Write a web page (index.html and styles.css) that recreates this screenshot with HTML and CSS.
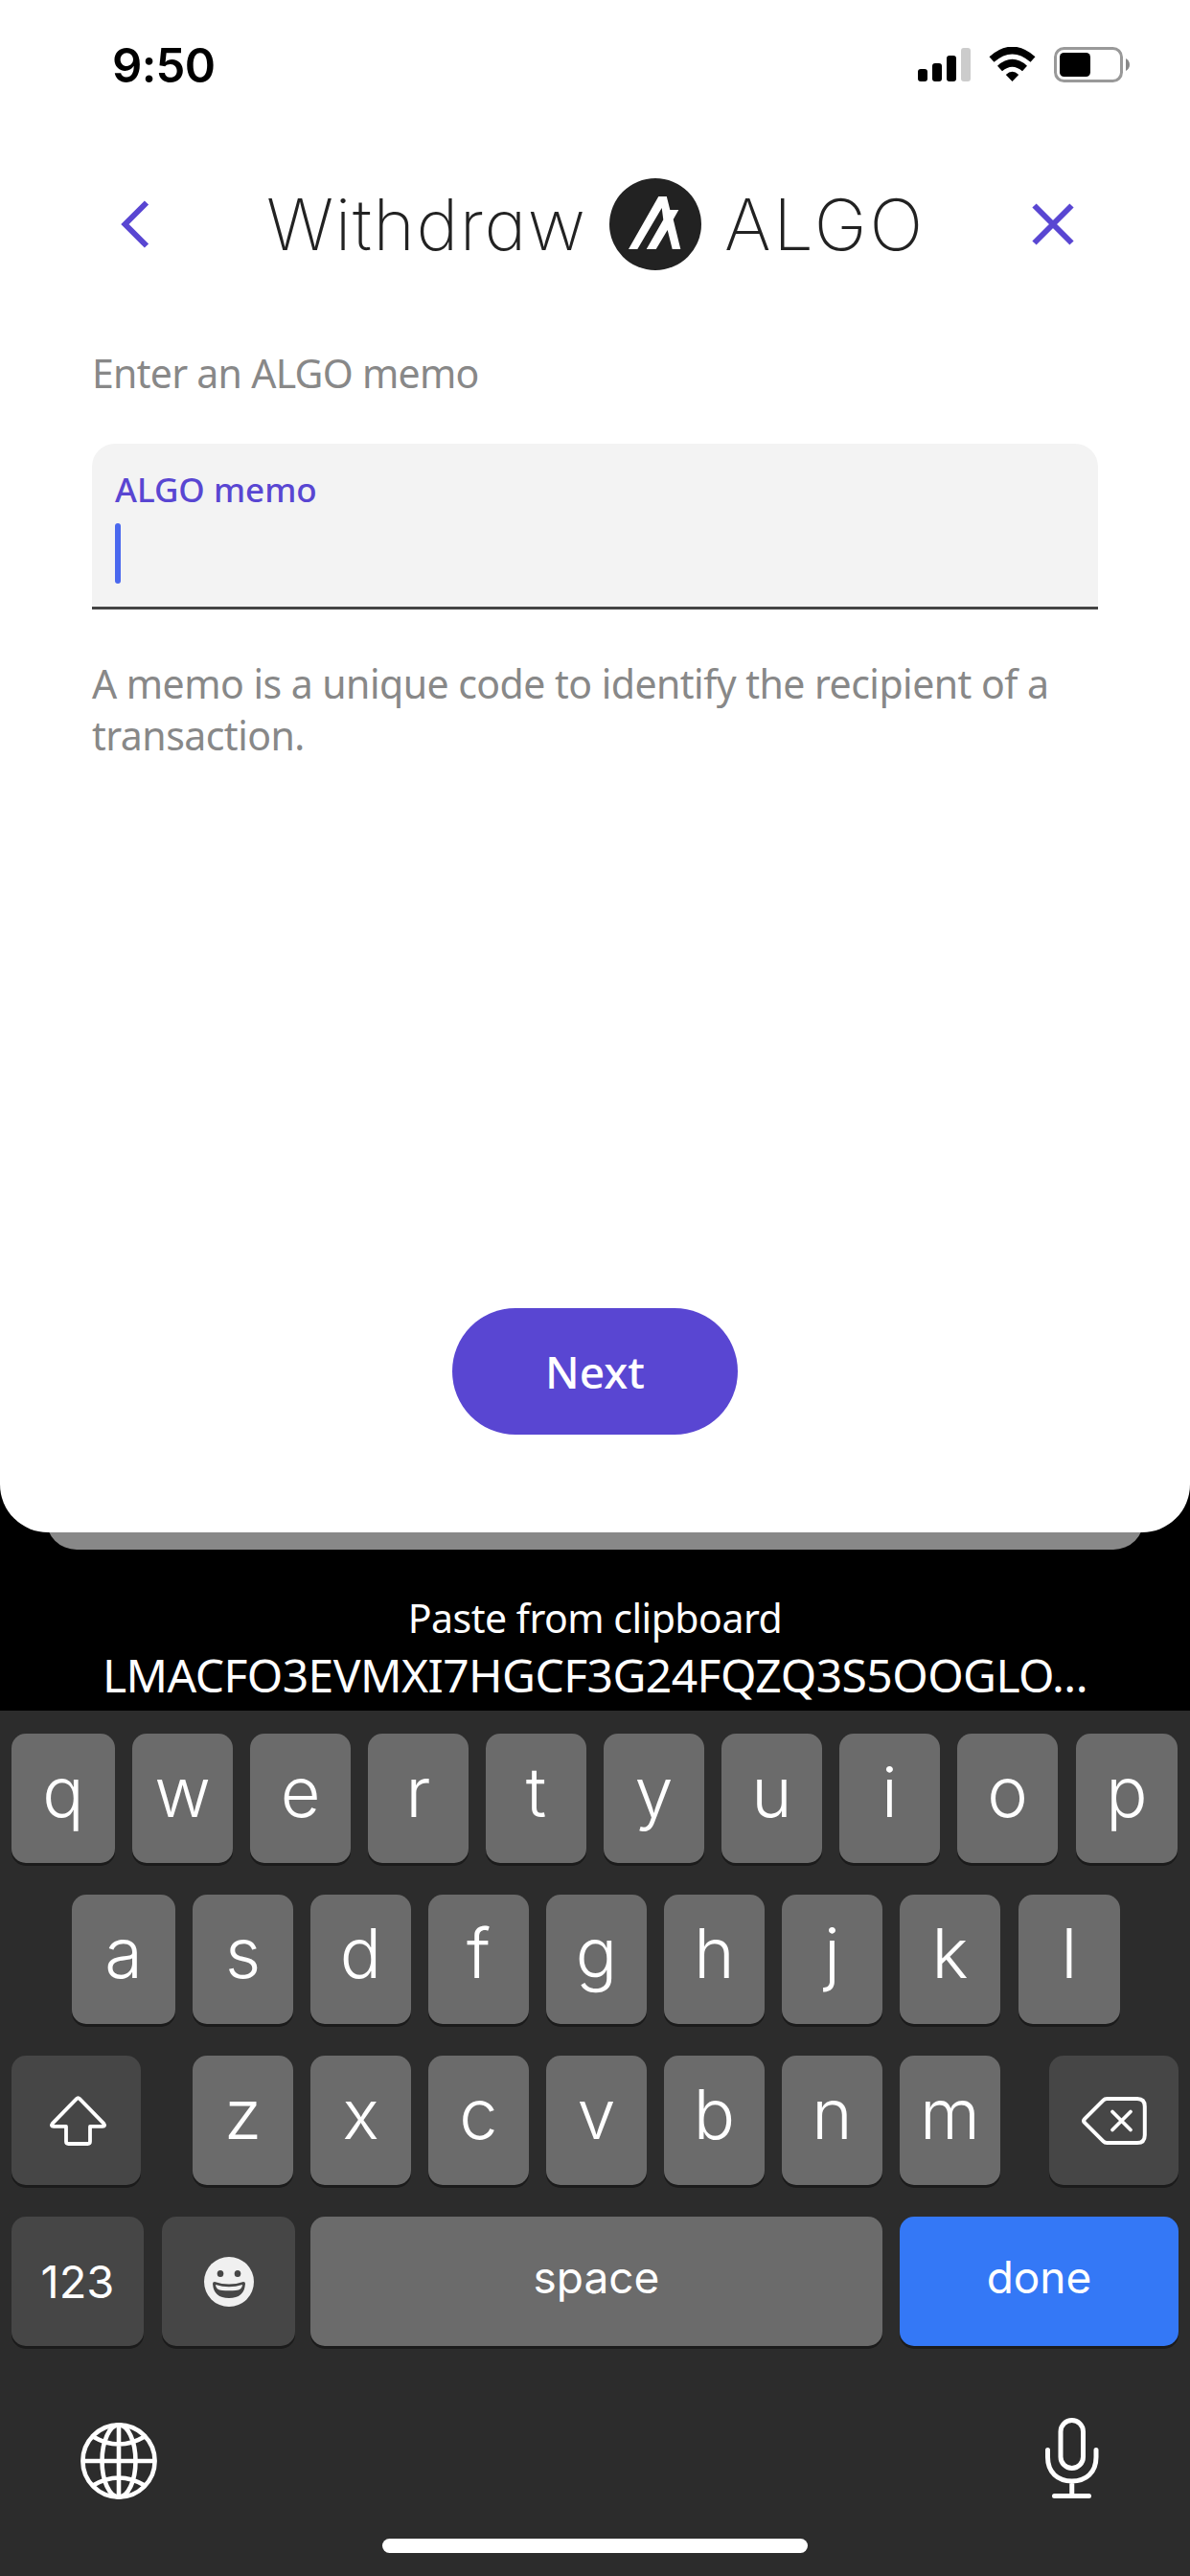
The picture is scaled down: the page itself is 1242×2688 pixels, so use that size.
FILE: index.html
```html
<!DOCTYPE html>
<html lang="en">
<head>
<meta charset="utf-8">
<title>Withdraw ALGO</title>
<link rel="stylesheet" href="styles.css">
</head>
<body>
<div class="phone">
  <div class="stage">
    <main class="sheet">
      <div class="status">
        <span class="time">9:50</span>
        <svg class="status-icons" width="222" height="38" viewBox="957 49 222 38">
          <rect x="957" y="72" width="10" height="13" rx="3"/>
          <rect x="972" y="66" width="10" height="19" rx="3"/>
          <rect x="987" y="58" width="10" height="27" rx="3"/>
          <rect x="1002" y="50" width="10" height="35" rx="3" fill="#ccc"/>
          <g fill="none" stroke="#000">
            <path d="M1034 62Q1055.500 43 1077 62" stroke-width="7.500"/>
            <path d="M1042.500 71.500Q1055.500 60 1068.500 71.500" stroke-width="7.500"/>
          </g>
          <path d="M1048.800 78Q1055.500 71.500 1062.200 78L1055.500 85Z"/>
          <rect x="1100.500" y="50.500" width="69" height="34" rx="9" fill="none" stroke="#999" stroke-width="3"/>
          <rect x="1105" y="55" width="32" height="25" rx="4.500"/>
          <path d="M1174 61C1179.300 63.500 1179.300 71.500 1174 74Z" fill="#888"/>
        </svg>
      </div>
      <header class="header">
        <svg class="back" width="34" height="56" viewBox="0 0 34 56"><path d="M29 5.500L6.500 28L29 50.500" fill="none" stroke="#5946d2" stroke-width="6"/></svg>
        <h1 class="title">
          <span class="word-a">Withdraw</span>
          <svg class="coin" width="96" height="96" viewBox="0 0 96 96">
            <circle cx="48" cy="48" r="48" fill="#222"/>
            <path fill="#fff" d="M20 74L51.300 19H59.800L63.300 33H72.300L66.700 43L74.300 74H65.700L60.700 54L48.700 74H38.700L56.300 43.300L54.700 31L29.300 74Z"/>
          </svg>
          <span class="word-b">ALGO</span>
        </h1>
        <svg class="close" width="44" height="44" viewBox="0 0 44 44"><path d="M2.500 2.500L41.500 41.500M41.500 2.500L2.500 41.500" fill="none" stroke="#5946d2" stroke-width="6"/></svg>
      </header>
      <p class="lead"><span>Enter an ALGO memo</span></p>
      <div class="field">
        <span class="label">ALGO memo</span>
        <span class="caret"></span>
      </div>
      <p class="help">A memo is a unique code to identify the recipient of a<br>transaction.</p>
      <button class="next">Next</button>
    </main>
    <div class="behind"></div>
    <div class="paste">
      <span class="paste-title">Paste from clipboard</span>
      <span class="paste-value">LMACFO3EVMXI7HGCF3G24FQZQ3S5OOGLO...</span>
    </div>
  </div>
  <div class="keyboard">
    <div class="row">
      <span class="key wide">q</span><span class="key">w</span><span class="key">e</span><span class="key">r</span><span class="key">t</span><span class="key">y</span><span class="key">u</span><span class="key">i</span><span class="key">o</span><span class="key last">p</span>
    </div>
    <div class="row row-2">
      <span class="key wide">a</span><span class="key">s</span><span class="key">d</span><span class="key">f</span><span class="key">g</span><span class="key">h</span><span class="key">j</span><span class="key">k</span><span class="key last">l</span>
    </div>
    <div class="row">
      <span class="key dark shift"><svg width="64" height="58" viewBox="50 2185 64 58"><path d="M79.800 2191.200Q81.500 2189.500 83.200 2191.200L108.300 2216.800Q110.500 2219.800 107 2219.900H94V2235.500Q94 2238 91.500 2238H71.500Q69 2238 69 2235.500V2219.900H56Q52.500 2219.800 54.700 2216.800Z" fill="none" stroke="#fff" stroke-width="3.800" stroke-linejoin="round"/></svg></span>
      <span class="key">z</span><span class="key">x</span><span class="key">c</span><span class="key">v</span><span class="key">b</span><span class="key">n</span><span class="key">m</span>
      <span class="key dark delete"><svg width="72" height="56" viewBox="1127 2186 72 56"><g fill="none" stroke="#fff" stroke-width="4" stroke-linecap="round" stroke-linejoin="round"><path d="M1155.500 2191H1187Q1194.800 2191 1194.800 2199V2229Q1194.800 2237 1187 2237H1155.500Q1153 2237 1151.500 2235.400L1132.200 2216.200Q1130 2214 1132.200 2211.800L1151.500 2192.600Q1153 2191 1155.500 2191Z"/><path d="M1161 2204.500L1180 2223.500M1180 2204.500L1161 2223.500" stroke-width="3.800"/></g></svg></span>
    </div>
    <div class="row">
      <span class="key dark num">123</span>
      <span class="key dark emoji"><svg width="52" height="52" viewBox="0 0 52 52"><circle cx="26" cy="26" r="26" fill="#f0f0f0"/><g fill="#464646"><ellipse cx="17" cy="17.500" rx="3.300" ry="3.600"/><ellipse cx="35" cy="17.500" rx="3.300" ry="3.600"/><path d="M11 26Q26 31 41 26Q43 26 43 28Q42 43 26 43Q10 43 9 28Q9 26 11 26Z"/></g><path d="M12 29Q26 33.500 40 29Q40 34.500 33 35Q26 35.600 19 35Q12 34.500 12 29Z" fill="#f0f0f0"/></svg></span>
      <span class="key text space">space</span>
      <span class="key text done">done</span>
    </div>
    <div class="tools">
      <svg class="globe" width="80" height="80" viewBox="-40 -40 80 80"><g fill="none" stroke="#fff" stroke-width="4.600"><circle r="37.600"/><ellipse rx="17.500" ry="37.600"/><path d="M0 -38V38M-38 0H38M-27 -25.500Q0 -9.500 27 -25.500M-27 25.500Q0 9.500 27 25.500"/></g></svg>
      <svg class="mic" width="58" height="86" viewBox="1089 2522 58 86"><g fill="none" stroke="#fff" stroke-width="5" stroke-linecap="round"><rect x="1106" y="2525.500" width="23.500" height="50" rx="11.750"/><path d="M1092.500 2556.500V2564C1092.500 2580 1103 2589 1117.750 2589S1143 2580 1143 2564V2556.500M1117.750 2589V2604M1099.500 2604.500H1135.500"/></g></svg>
    </div>
    <div class="home"></div>
  </div>
</div>
</body>
</html>
```
FILE: styles.css
```css
* { box-sizing: border-box; }
body { margin: 0; background: #000; }
svg { display: block; flex: none; }
.phone { width: 1242px; height: 2688px; display: flex; flex-direction: column; font-family: "Noto Sans", sans-serif; overflow: hidden; }
.stage { height: 1785px; background: #000; display: flex; flex-direction: column; align-items: center; }
.sheet { width: 1242px; height: 1599px; flex: none; background: #fff; border-radius: 0 0 50px 50px; display: flex; flex-direction: column; align-items: stretch; padding: 0 96px; position: relative; z-index: 1; }
.status { height: 136px; margin: 0 -33px 0 21px; display: flex; justify-content: space-between; padding-top: 49px; }
.time { font: 600 49px/38px Inter, sans-serif; letter-spacing: -0.7px; white-space: nowrap; padding-top: 1px; }
.status-icons { margin-right: -1px; }
.header { height: 196px; display: flex; align-items: center; padding: 0 25px 0 28px; }
.title { margin: 0 0 0 120px; display: flex; align-items: center; font: 250 74px/90px Inter, sans-serif; font-feature-settings: "cv11"; color: #222; white-space: nowrap; }
.word-a { width: 358px; letter-spacing: 1.6px; }
.coin { margin-right: 24px; }
.word-b { width: 210px; letter-spacing: 2.8px; }
.close { margin-left: auto; }
.lead { margin: 30px 0 0; font-size: 41px; line-height: 54px; letter-spacing: -0.72px; color: #888; }
.field { margin-top: 47px; height: 173px; background: #f3f3f3; border-radius: 24px 24px 0 0; border-bottom: 3px solid #444; display: flex; flex-direction: column; align-items: flex-start; padding: 24px; }
.label { font-size: 35px; font-weight: 500; line-height: 48px; color: #5946d2; white-space: nowrap; }
.caret { width: 6px; height: 63px; margin-top: 11px; border-radius: 3px; background: #4a68ee; flex: none; }
.help { margin: 50px 0 0; font-size: 41px; line-height: 54px; letter-spacing: -0.53px; color: #888; white-space: nowrap; }
.next { margin: auto auto 102px; width: 298px; height: 132px; padding: 0; border: 0; border-radius: 66px; background: #5946d2; color: #fff; font: 500 46px/60px "Noto Sans", sans-serif; }
.behind { width: 1146px; height: 66px; margin-top: -48px; flex: none; background: #888; border-radius: 0 0 32px 32px; }
.paste { margin-top: 43px; display: flex; flex-direction: column; align-items: center; color: #fff; white-space: nowrap; }
.paste-title { font-size: 41px; line-height: 57px; letter-spacing: -0.5px; }
.paste-value { font-size: 48px; line-height: 62px; letter-spacing: -0.57px; }
.keyboard { height: 903px; background: #2c2c2c; padding: 24px 12px 0; display: flex; flex-direction: column; }
.row { display: flex; gap: 18px; height: 135px; margin-bottom: 33px; flex: none; }
.row-2 { padding-left: 63px; }
.key { width: 105px; height: 135px; flex: none; border-radius: 15px; background: #6b6b6b; box-shadow: 0 3px 0 #1b1b1b; color: #fff; font: 350 72px/122px Inter, sans-serif; text-align: center; }
.wide { width: 108px; }
.last { width: 106px; margin-left: 1px; }
.dark { background: #464646; display: flex; align-items: center; justify-content: center; }
.shift { width: 135px; margin-right: 36px; padding-left: 4px; }
.delete { width: 135px; margin-left: 33px; padding-left: 1px; }
.num { width: 138px; font-size: 47px; font-weight: 400; line-height: 135px; }
.emoji { width: 139px; margin: 0 -2px 0 1px; }
.text { font-size: 46px; font-weight: 400; line-height: 127px; }
.space { width: 597px; }
.done { width: 291px; background: #3478f6; }
.tools { display: flex; justify-content: space-between; align-items: center; margin-top: 41px; padding: 0 82px 0 72px; height: 86px; flex: none; }
.globe { margin-top: 5px; }
.home { width: 444px; height: 15px; margin: 41px auto 0; border-radius: 8px; background: #fff; }
```
